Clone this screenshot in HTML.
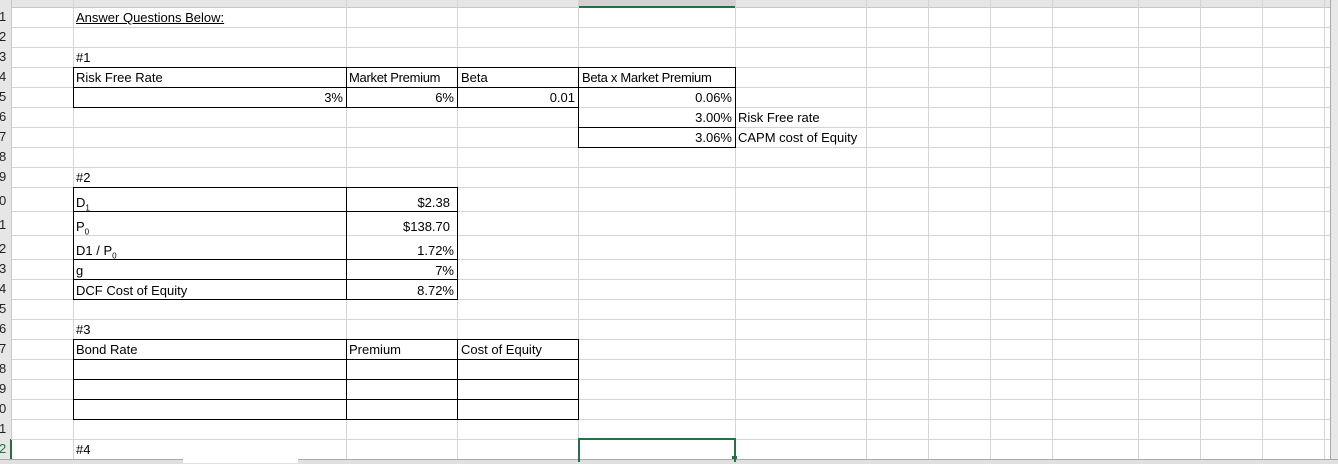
<!DOCTYPE html><html><head><style>
body{margin:0;width:1338px;height:463px;overflow:hidden;background:#fff;position:relative;font-family:"Liberation Sans",sans-serif;font-size:13px;color:#000}
.v{position:absolute;top:0;width:1px;height:459px;background:#d4d4d4}
.h{position:absolute;left:11px;width:1319px;height:1px;background:#d4d4d4}
.t{position:absolute;white-space:nowrap;line-height:20px;margin-top:1px}
.r{text-align:right}
.bx{position:absolute;border:1px solid #000;box-sizing:border-box}
.rh{position:absolute;left:0;width:11px;font-size:13px;line-height:20px;color:#222;overflow:hidden;text-indent:-1px}
</style></head><body>
<div style="position:absolute;left:0;top:0;width:1338px;height:7px;background:#e6e6e6;border-bottom:1px solid #c8c8c8"></div>
<div style="position:absolute;left:578px;top:0;width:157px;height:6px;background:#d2d2d2;border-bottom:2px solid #217346"></div>
<div style="position:absolute;left:0;top:0;width:11px;height:459px;background:#e6e6e6;border-right:1px solid #c8c8c8"></div>
<div style="position:absolute;left:10px;top:439px;width:2px;height:20px;background:#217346"></div>
<div style="position:absolute;left:1330px;top:0;width:8px;height:463px;background:#e8e8e8;border-left:1px solid #aaa"></div>
<div style="position:absolute;left:0;top:459px;width:1338px;height:4px;background:#e0e0e0;border-top:1px solid #aaa"></div>
<div style="position:absolute;left:183px;top:459px;width:115px;height:4px;background:#fff"></div>
<div class="v" style="left:73px"></div><div class="v" style="left:346px"></div><div class="v" style="left:457px"></div><div class="v" style="left:578px"></div><div class="v" style="left:735px"></div><div class="v" style="left:866px"></div><div class="v" style="left:928px"></div><div class="v" style="left:990px"></div><div class="v" style="left:1052px"></div><div class="v" style="left:1138px"></div><div class="v" style="left:1200px"></div><div class="v" style="left:1262px"></div><div class="v" style="left:1324px"></div>
<div class="h" style="top:27px"></div><div class="h" style="top:47px"></div><div class="h" style="top:67px"></div><div class="h" style="top:87px"></div><div class="h" style="top:107px"></div><div class="h" style="top:127px"></div><div class="h" style="top:147px"></div><div class="h" style="top:167px"></div><div class="h" style="top:187px"></div><div class="h" style="top:211px"></div><div class="h" style="top:235px"></div><div class="h" style="top:259px"></div><div class="h" style="top:279px"></div><div class="h" style="top:299px"></div><div class="h" style="top:319px"></div><div class="h" style="top:339px"></div><div class="h" style="top:359px"></div><div class="h" style="top:379px"></div><div class="h" style="top:399px"></div><div class="h" style="top:419px"></div><div class="h" style="top:439px"></div>
<div class="rh" style="top:7px">1</div><div class="rh" style="top:27px">2</div><div class="rh" style="top:47px">3</div><div class="rh" style="top:67px">4</div><div class="rh" style="top:87px">5</div><div class="rh" style="top:107px">6</div><div class="rh" style="top:127px">7</div><div class="rh" style="top:147px">8</div><div class="rh" style="top:167px">9</div><div class="rh" style="top:191px">0</div><div class="rh" style="top:215px">1</div><div class="rh" style="top:239px">2</div><div class="rh" style="top:259px">3</div><div class="rh" style="top:279px">4</div><div class="rh" style="top:299px">5</div><div class="rh" style="top:319px">6</div><div class="rh" style="top:339px">7</div><div class="rh" style="top:359px">8</div><div class="rh" style="top:379px">9</div><div class="rh" style="top:399px">0</div><div class="rh" style="top:419px">1</div><div class="rh" style="top:439px;color:#217346">2</div>
<div class="bx" style="left:73px;top:67px;width:506px;height:41px"></div>
<div class="bx" style="left:73px;top:87px;width:506px;height:1px;border-width:1px 0 0 0"></div>
<div class="bx" style="left:346px;top:67px;width:112px;height:41px;border-width:0 1px"></div>
<div class="bx" style="left:578px;top:67px;width:158px;height:81px"></div>
<div class="bx" style="left:578px;top:87px;width:158px;height:41px;border-width:1px 0"></div>
<div class="bx" style="left:73px;top:187px;width:385px;height:113px"></div>
<div class="bx" style="left:346px;top:187px;width:1px;height:113px;border-width:0 0 0 1px"></div>
<div class="bx" style="left:73px;top:211px;width:385px;height:49px;border-width:1px 0"></div>
<div class="bx" style="left:73px;top:235px;width:385px;height:45px;border-width:0 0 1px 0"></div>
<div class="bx" style="left:73px;top:339px;width:506px;height:81px"></div>
<div class="bx" style="left:73px;top:359px;width:506px;height:41px;border-width:1px 0"></div>
<div class="bx" style="left:73px;top:379px;width:506px;height:1px;border-width:1px 0 0 0"></div>
<div class="bx" style="left:346px;top:339px;width:112px;height:81px;border-width:0 1px"></div>
<div class="bx" style="left:578px;top:438px;width:158px;height:24px;border:2px solid #217346;border-bottom:0"></div>
<div style="position:absolute;left:732px;top:456px;width:5px;height:3px;background:#217346"></div>
<div class="t" style="left:76px;top:7px;text-decoration:underline">Answer Questions Below:</div>
<div class="t" style="left:76px;top:47px">#1</div>
<div class="t" style="left:76px;top:67px">Risk Free Rate</div>
<div class="t" style="left:349px;top:67px;letter-spacing:-0.3px">Market Premium</div>
<div class="t" style="left:461px;top:67px">Beta</div>
<div class="t" style="left:582px;top:67px;letter-spacing:-0.3px">Beta x Market Premium</div>
<div class="t r" style="left:200px;width:143px;top:87px">3%</div>
<div class="t r" style="left:350px;width:104px;top:87px">6%</div>
<div class="t r" style="left:460px;width:115px;top:87px">0.01</div>
<div class="t r" style="left:580px;width:152px;top:87px">0.06%</div>
<div class="t r" style="left:580px;width:152px;top:107px">3.00%</div>
<div class="t" style="left:738px;top:107px">Risk Free rate</div>
<div class="t r" style="left:580px;width:152px;top:127px">3.06%</div>
<div class="t" style="left:738px;top:127px">CAPM cost of Equity</div>
<div class="t" style="left:76px;top:167px">#2</div>
<div class="t" style="left:76px;top:192px">D<sub style="font-size:8px">1</sub></div>
<div class="t r" style="left:350px;width:100px;top:192px">$2.38</div>
<div class="t" style="left:76px;top:216px">P<sub style="font-size:8px">0</sub></div>
<div class="t r" style="left:350px;width:100px;top:216px">$138.70</div>
<div class="t" style="left:76px;top:240px">D1 / P<sub style="font-size:8px">0</sub></div>
<div class="t r" style="left:350px;width:104px;top:240px">1.72%</div>
<div class="t" style="left:76px;top:260px">g</div>
<div class="t r" style="left:350px;width:104px;top:260px">7%</div>
<div class="t" style="left:76px;top:280px">DCF Cost of Equity</div>
<div class="t r" style="left:350px;width:104px;top:280px">8.72%</div>
<div class="t" style="left:76px;top:319px">#3</div>
<div class="t" style="left:76px;top:339px">Bond Rate</div>
<div class="t" style="left:349px;top:339px">Premium</div>
<div class="t" style="left:461px;top:339px">Cost of Equity</div>
<div class="t" style="left:76px;top:439px">#4</div>
</body></html>
